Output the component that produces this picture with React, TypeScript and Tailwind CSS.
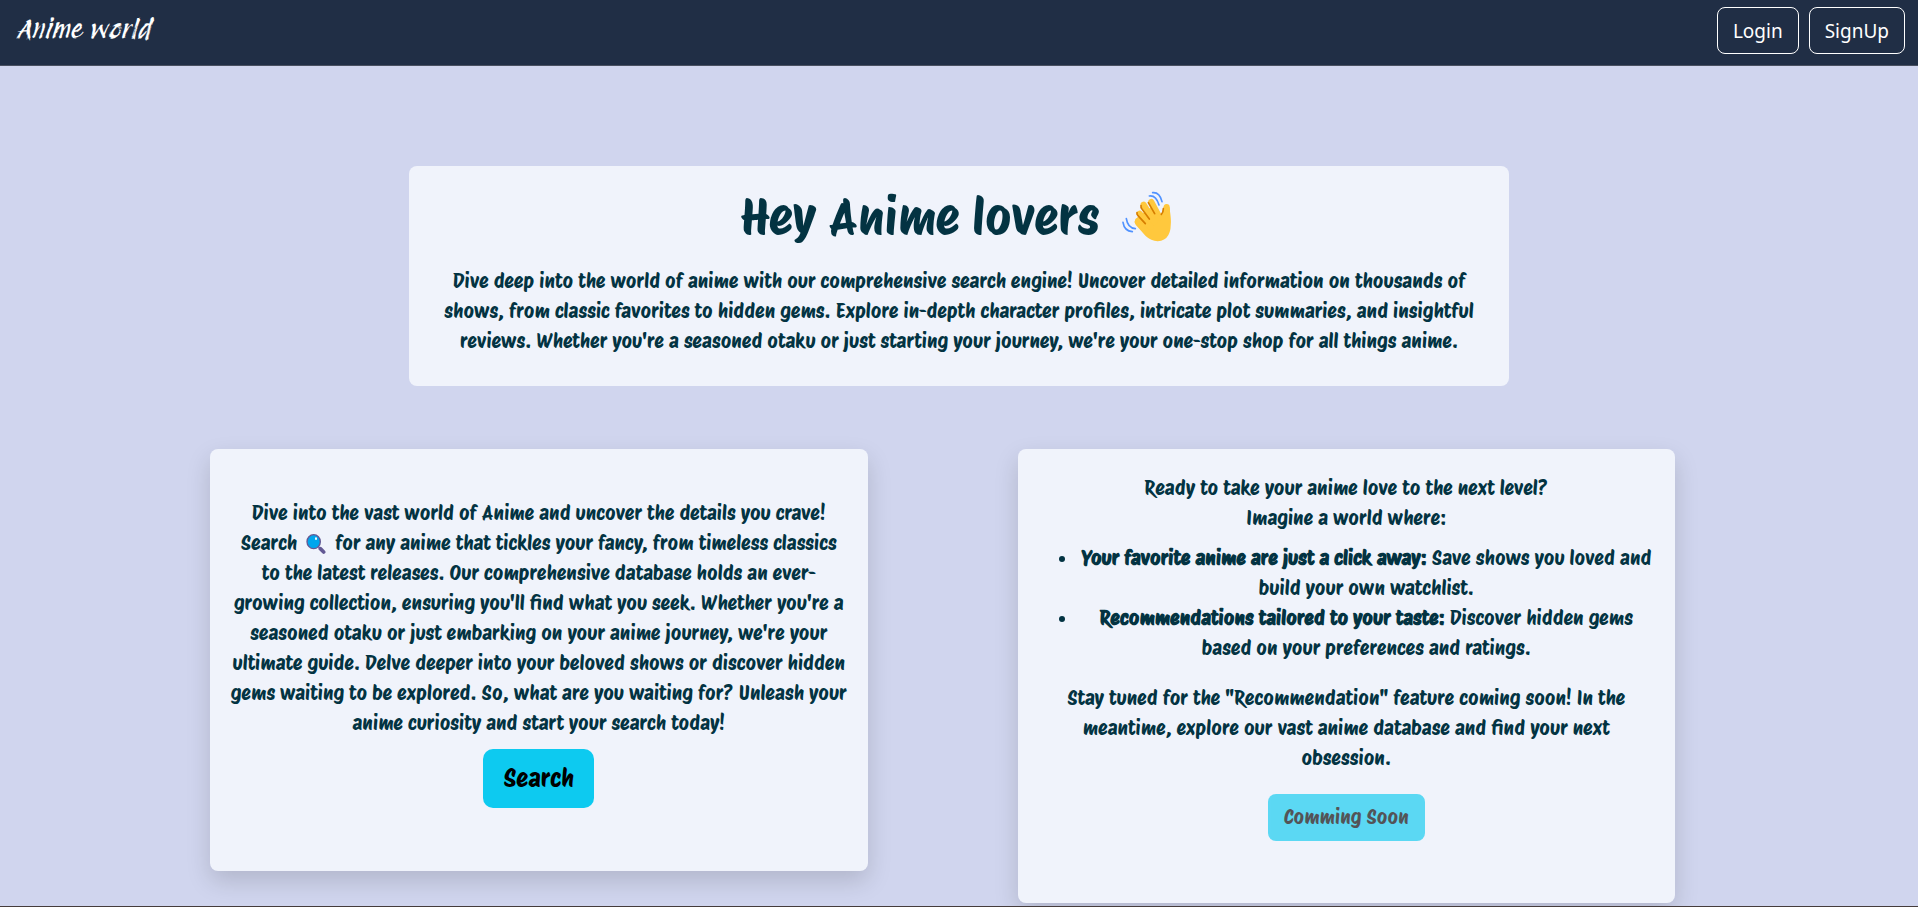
import type { ReactNode } from "react";

function WavingHand() {
  return (
    <svg viewBox="60 30 156 156" className="h-[52px] w-[52px]" role="img" aria-label="waving hand">
      <g fill="none" strokeLinecap="round">
        <path d="M197 81L200 125" stroke="#FFC83D" strokeWidth="18" />
        <path
          d="M103 117L150 82L178 103Q186 97 188 80L206 82L209 118Q214 182 170 184Q150 183 134 168L104 134Q99 124 103 117Z"
          fill="#FFC83D"
        />
        <path d="M110 126L142 158" stroke="#FFC83D" strokeWidth="17" />
        <path d="M116 101L148 140" stroke="#FFC83D" strokeWidth="18" />
        <path d="M128 74L160 126" stroke="#FFC83D" strokeWidth="18" />
        <path d="M151 66L176 112" stroke="#FFC83D" strokeWidth="18" />
        <path d="M142 68L161 101" stroke="#D67D00" strokeWidth="5" />
        <path d="M120 77Q119 82 123 87L145 117" stroke="#D67D00" strokeWidth="5" />
        <path d="M108 98Q107 103 111 107L133 131" stroke="#D67D00" strokeWidth="5" />
        <path d="M187 86Q187 97 181 103" stroke="#D67D00" strokeWidth="5" />
        <path d="M155 38Q176 36 183 65" stroke="#5092FF" strokeWidth="5" />
        <path d="M145 48Q165 45 174 75" stroke="#5092FF" strokeWidth="5" />
        <path d="M66 127Q70 153 94 155" stroke="#5092FF" strokeWidth="5" />
        <path d="M76 116Q80 144 103 146" stroke="#5092FF" strokeWidth="5" />
      </g>
    </svg>
  );
}

function Magnifier() {
  return (
    <svg viewBox="0 0 58 60" className="mx-1 inline h-5 w-5 align-[-4px]" role="img" aria-label="magnifying glass">
      <path d="M35 37L43 45" stroke="#8D65C5" strokeWidth="5" strokeLinecap="round" />
      <path d="M42 44L52 54" stroke="#635994" strokeWidth="11" strokeLinecap="round" />
      <ellipse cx="22" cy="23" rx="20" ry="21" fill="#00A6ED" stroke="#635994" strokeWidth="4" />
      <ellipse cx="29" cy="14" rx="3" ry="4" fill="#fff" />
    </svg>
  );
}

function NavButton({ children }: { children: ReactNode }) {
  return (
    <button
      type="button"
      className="h-[47px] rounded-lg border border-white px-[15px] font-['Noto_Sans','Open_Sans',sans-serif] text-[19px] leading-[30px]"
    >
      {children}
    </button>
  );
}

function Card({ className, children }: { className: string; children: ReactNode }) {
  return (
    <section
      className={`flex flex-col items-center rounded-lg bg-[#f0f3fb] px-5 shadow-[0_10px_24px_rgba(0,0,0,0.15)] ${className}`}
    >
      {children}
    </section>
  );
}

export default function App() {
  return (
    <div className="min-h-screen overflow-hidden border-b border-[#453c3c] bg-[#d0d5ee] text-center font-['Protest_Riot','Lato',sans-serif] text-xl leading-[30px] text-[#033342]">
      <header className="flex h-[66px] items-start justify-between border-b border-[#495060] bg-[#202e45] py-[7px] pr-[13px] pl-4 text-white">
        <a href="#" className="pt-[9px] font-['Protest_Revolution','Lato',sans-serif] text-[25px] leading-[26px] italic">
          Anime world
        </a>
        <nav className="flex gap-[10px]">
          <NavButton>Login</NavButton>
          <NavButton>SignUp</NavButton>
        </nav>
      </header>

      <main>
        <section className="mx-auto mt-[100px] max-w-[1100px] rounded-lg bg-[#f0f3fb] px-8 pt-5 pb-[30px]">
          <h1 className="mb-5 flex items-center justify-center gap-[22px] pr-1 text-[50px] leading-[60px]">
            Hey Anime lovers <WavingHand />
          </h1>
          <p>
            Dive deep into the world of anime with our comprehensive search engine! Uncover detailed information on
            thousands of shows, from classic favorites to hidden gems. Explore in-depth character profiles, intricate
            plot summaries, and insightful reviews. Whether you're a seasoned otaku or just starting your journey, we're
            your one-stop shop for all things anime.
          </p>
        </section>

        <div className="mt-[63px] grid grid-cols-2 items-start gap-[150px] pr-[243px] pl-[210px]">
          <Card className="pt-[49px] pb-[63px]">
            <p>
              Dive into the vast world of Anime and uncover the details you crave! Search <Magnifier /> for any anime
              that tickles your fancy, from timeless classics to the latest releases. Our comprehensive database holds
              an ever-growing collection, ensuring you'll find what you seek. Whether you're a seasoned otaku or just
              embarking on your anime journey, we're your ultimate guide. Delve deeper into your beloved shows or
              discover hidden gems waiting to be explored. So, what are you waiting for? Unleash your anime curiosity
              and start your search today!
            </p>
            <button
              type="button"
              className="mt-[11px] h-[59px] rounded-[10px] bg-[#0dcaf0] px-5 pb-[2px] text-[25px] leading-[38px] text-black"
            >
              Search
            </button>
          </Card>

          <Card className="pt-6 pb-[62px]">
            <p>
              Ready to take your anime love to the next level?
              <br />
              Imagine a world where:
            </p>
            <ul className="mt-[10px] list-disc pl-10">
              <li>
                <strong>Your favorite anime are just a click away:</strong> Save shows you loved and build your own
                watchlist.
              </li>
              <li>
                <strong>Recommendations tailored to your taste:</strong> Discover hidden gems based on your preferences
                and ratings.
              </li>
            </ul>
            <p className="mt-5">
              Stay tuned for the "Recommendation" feature coming soon! In the meantime, explore our vast anime database
              and find your next obsession.
            </p>
            <button
              type="button"
              disabled
              className="mt-[21px] h-[47px] rounded-lg bg-[#0dcaf0] px-4 pb-[2px] text-black opacity-65"
            >
              Comming Soon
            </button>
          </Card>
        </div>
      </main>
    </div>
  );
}
